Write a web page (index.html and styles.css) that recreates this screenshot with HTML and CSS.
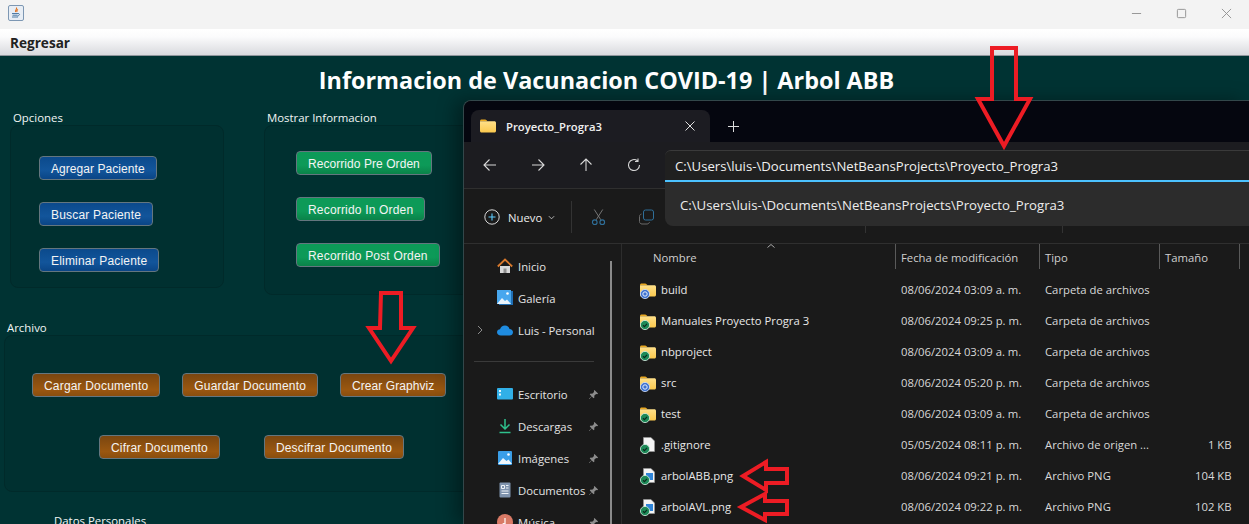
FILE: index.html
```html
<!DOCTYPE html>
<html>

<head>
    <meta charset="utf-8">
    <title>Arbol ABB</title>
    <link rel="stylesheet" href="styles.css">
</head>

<body>
    <svg class="defs" width="0" height="0">
        <defs>
            <linearGradient id="folderFill" x1="0" y1="0" x2="0" y2="1">
                <stop offset="0" stop-color="#ffe089" />
                <stop offset="1" stop-color="#fbc94e" />
            </linearGradient>
            <symbol id="folder" viewBox="0 0 16 14">
                <path d="M0 2.2C0 1.2.7.5 1.6.5h3.6c.5 0 .8.2 1.1.5L7.6 2.2H0z" fill="#e9a820" />
                <path d="M0 2.2h14.4c.9 0 1.6.7 1.6 1.6v8.2c0 .9-.7 1.5-1.6 1.5H1.6C.7 13.5 0 12.9 0 12z" fill="url(#folderFill)" />
            </symbol>
            <symbol id="okBadge" viewBox="0 0 10 10">
                <circle cx="5" cy="5" r="4.6" fill="#1d8a58" stroke="#d8efe4" stroke-width=".8" />
                <path d="M3 5.2l1.5 1.4L7 3.8" fill="none" stroke="#0b2a1e" stroke-width="1.2" />
            </symbol>
            <symbol id="syncBadge" viewBox="0 0 10 10">
                <circle cx="5" cy="5" r="4.6" fill="#3f72cf" stroke="#d5e2fb" stroke-width=".8" />
                <circle cx="5" cy="5" r="2.2" fill="none" stroke="#e6eefc" stroke-width="1" />
            </symbol>
            <symbol id="page" viewBox="0 0 12 15">
                <path d="M.5.5h7.5l3.5 3.5v10.500H.5z" fill="#f4f4f4" stroke="#9a9a9a" stroke-width=".6" />
            </symbol>
            <symbol id="pin" viewBox="0 0 12 12">
                <path d="M7 1l4 4-1 .6-1.200-.2-2 2 .2 1.800-.9.900-2-2L1.500 11 1 10.500l2.900-2.600-2-2 .9-.9 1.800.2 2-2-.2-1.200z" fill="#8c8c8c" />
            </symbol>
        </defs>
    </svg>

    <header class="titlebar">
        <svg class="java-icon" viewBox="0 0 16 16">
            <rect x=".5" y=".5" width="15" height="15" rx="1.500" fill="#e8eef5" stroke="#7d97b3" />
            <path d="M8.500 2.500c1 1.500-2 2.500-.8 4.500M10 4.500c-1.500.7-1.500 1.500-.8 2.500" fill="none" stroke="#e2701c" stroke-width="1.100" />
            <path d="M4 8.500h6M4.500 10.200h5M4 12h6M10 8.500c2 0 2 2-.5 2.500" fill="none" stroke="#3d6d9c" stroke-width=".9" />
        </svg>
        <div class="window-btns">
            <svg viewBox="0 0 12 12"><path d="M1 6h10" /></svg>
            <svg viewBox="0 0 12 12"><rect x="1.500" y="1.500" width="9" height="9" rx="1" /></svg>
            <svg viewBox="0 0 12 12"><path d="M1 1l10 10M11 1L1 11" /></svg>
        </div>
    </header>

    <nav class="menubar">Regresar</nav>

    <main class="app">
        <h1 class="app-title">Informacion de Vacunacion COVID-19 | Arbol ABB</h1>

        <div class="top-row">
            <section class="group group-opciones">
                <h2 class="group-label">Opciones</h2>
                <div class="panel panel-opciones">
                    <button class="btn btn-blue btn-tight">Agregar Paciente</button>
                    <button class="btn btn-blue">Buscar Paciente</button>
                    <button class="btn btn-blue">Eliminar Paciente</button>
                </div>
            </section>
            <section class="group group-mostrar">
                <h2 class="group-label">Mostrar Informacion</h2>
                <div class="panel panel-mostrar">
                    <button class="btn btn-green btn-tight">Recorrido Pre Orden</button>
                    <button class="btn btn-green">Recorrido In Orden</button>
                    <button class="btn btn-green">Recorrido Post Orden</button>
                </div>
            </section>
        </div>

        <section class="group group-archivo">
            <h2 class="group-label">Archivo</h2>
            <div class="panel panel-archivo">
                <div class="btn-row">
                    <button class="btn btn-orange">Cargar Documento</button>
                    <button class="btn btn-orange">Guardar Documento</button>
                    <button class="btn btn-orange btn-tight">Crear Graphviz</button>
                </div>
                <div class="btn-row btn-row-second">
                    <button class="btn btn-orange">Cifrar Documento</button>
                    <button class="btn btn-orange">Descifrar Documento</button>
                </div>
            </div>
        </section>

        <h2 class="group-label group-datos">Datos Personales</h2>
    </main>

    <div class="explorer">
        <div class="tabstrip">
            <div class="tab">
                <svg class="tab-folder"><use href="#folder" /></svg>
                <span class="tab-name">Proyecto_Progra3</span>
                <svg class="tab-close" viewBox="0 0 10 10"><path d="M.5.5l9 9M9.500.5l-9 9" /></svg>
            </div>
            <svg class="tab-plus" viewBox="0 0 11 11"><path d="M5.500 0v11M0 5.500h11" /></svg>
        </div>

        <div class="toolbar">
            <div class="nav-btns">
                <svg viewBox="0 0 14 14"><path d="M13 7H1M6.500 1.500L1 7l5.500 5.500" /></svg>
                <svg viewBox="0 0 14 14"><path d="M1 7h12M7.500 1.500L13 7l-5.500 5.500" /></svg>
                <svg viewBox="0 0 14 14"><path d="M7 13V1M1.500 6.500L7 1l5.500 5.500" /></svg>
                <svg viewBox="0 0 14 14"><path d="M12.500 7A5.500 5.500 0 1 1 10.500 2.800M11 .5v3h-3" /></svg>
            </div>
            <div class="address">C:\Users\luis-\Documents\NetBeansProjects\Proyecto_Progra3</div>
            <div class="suggest">C:\Users\luis-\Documents\NetBeansProjects\Proyecto_Progra3</div>
        </div>

        <div class="cmdbar">
            <svg class="new-icon" viewBox="0 0 16 16">
                <circle cx="8" cy="8" r="7.200" fill="none" stroke="#d8d8d8" />
                <path d="M8 4.500v7M4.500 8h7" fill="none" stroke="#60cdff" stroke-width="1.100" />
            </svg>
            <span class="new-label">Nuevo</span>
            <svg class="new-chevron" viewBox="0 0 8 5"><path d="M1 1l3 3 3-3" /></svg>
            <span class="cmd-sep"></span>
            <svg class="cmd-icon" viewBox="0 0 16 18">
                <path d="M3.500 1l7 11M12.500 1l-7 11" stroke="#7a7a7a" fill="none" />
                <circle cx="4" cy="14.500" r="2.500" fill="none" stroke="#2f6f99" stroke-width="1.200" />
                <circle cx="12" cy="14.500" r="2.500" fill="none" stroke="#2f6f99" stroke-width="1.200" />
            </svg>
            <svg class="cmd-icon cmd-copy" viewBox="0 0 15 15">
                <rect x="4.500" y=".5" width="10" height="10" rx="2" fill="none" stroke="#2f6f99" />
                <path d="M2.500 4.500C1.300 4.800.5 5.600.5 7v5c0 1.500 1 2.500 2.500 2.500h5c1.300 0 2.200-.8 2.500-2" fill="none" stroke="#6b6b6b" />
            </svg>
            <span class="cmd-sep cmd-sep-a"></span>
            <span class="cmd-sep cmd-sep-b"></span>
        </div>

        <div class="browser">
            <aside class="sidebar">
                <div class="side-item">
                    <svg class="side-icon" viewBox="0 0 16 16">
                        <path d="M3 8h10v7H3z" fill="#d9d9d9" />
                        <path d="M6.500 10.500h3V15h-3z" fill="#8d8d8d" />
                        <path d="M.8 8.500L8 1.500l7.200 7" fill="none" stroke="#d9792c" stroke-width="1.800" />
                    </svg>
                    <span>Inicio</span>
                </div>
                <div class="side-item">
                    <svg class="side-icon" viewBox="0 0 16 16">
                        <rect x="2" y="1" width="14" height="14" fill="#1f6fb5" />
                        <rect y="0" width="14" height="14" fill="#48a7ee" />
                        <path d="M0 14l5-6 3 3 2-1.500L14 14z" fill="#eaf4fc" />
                        <circle cx="10.500" cy="3.500" r="1.300" fill="#fff" />
                    </svg>
                    <span>Galería</span>
                </div>
                <div class="side-item">
                    <svg class="side-chevron" viewBox="0 0 6 10"><path d="M1 1l4 4-4 4" /></svg>
                    <svg class="side-icon" viewBox="0 0 16 12">
                        <path d="M4 11.500C1.500 11.500 0 10 0 8.300 0 6.500 1.500 5.300 3 5.300 3.700 3 5.500 1.500 8 1.500c2.300 0 4 1.500 4.500 3.500 2 0 3.500 1.300 3.500 3.200 0 2-1.500 3.300-3.500 3.300z" fill="#1f8ce0" />
                    </svg>
                    <span>Luis - Personal</span>
                </div>
                <div class="side-sep"></div>
                <div class="side-item">
                    <svg class="side-icon" viewBox="0 0 16 12">
                        <rect width="16" height="11.500" rx="1" fill="#31b0e8" />
                        <rect x="2" y="2" width="2" height="2" fill="#e8f7fd" />
                        <rect x="2" y="5.500" width="2" height="2" fill="#e8f7fd" />
                    </svg>
                    <span>Escritorio</span>
                    <svg class="pin"><use href="#pin" /></svg>
                </div>
                <div class="side-item">
                    <svg class="side-icon" viewBox="0 0 16 16">
                        <path d="M8 1v9M3.500 6.500L8 11l4.500-4.500" fill="none" stroke="#2fc18d" stroke-width="1.500" />
                        <path d="M2.500 14.500h11" stroke="#2fc18d" stroke-width="1.500" />
                    </svg>
                    <span>Descargas</span>
                    <svg class="pin"><use href="#pin" /></svg>
                </div>
                <div class="side-item">
                    <svg class="side-icon" viewBox="0 0 16 16">
                        <rect x="1" y="1" width="14" height="14" rx="1" fill="#3a9ee8" />
                        <path d="M1 14l5-6 3.500 3 2-1.500L15 14z" fill="#eef6fc" />
                        <circle cx="11.500" cy="4.500" r="1.300" fill="#fff" />
                    </svg>
                    <span>Imágenes</span>
                    <svg class="pin"><use href="#pin" /></svg>
                </div>
                <div class="side-item">
                    <svg class="side-icon" viewBox="0 0 16 16">
                        <rect x="2.500" y=".5" width="11" height="15" rx="1" fill="#7f93ad" />
                        <path d="M4.500 3.500h3v3h-3zM9 3.500h2.500M9 6h2.500M4.500 9h7M4.500 11.500h7" fill="none" stroke="#eef2f7" />
                    </svg>
                    <span>Documentos</span>
                    <svg class="pin"><use href="#pin" /></svg>
                </div>
                <div class="side-item">
                    <svg class="side-icon" viewBox="0 0 16 16">
                        <circle cx="8" cy="8" r="8" fill="#d97a66" />
                        <path d="M8 4v6" stroke="#fff" stroke-width="1.200" />
                        <circle cx="6.800" cy="10.500" r="1.500" fill="#fff" />
                    </svg>
                    <span>Música</span>
                    <svg class="pin"><use href="#pin" /></svg>
                </div>
                <span class="side-scroll"></span>
            </aside>

            <div class="files">
                <div class="file-row file-head">
                    <span class="col-name">Nombre</span>
                    <span class="col-head">Fecha de modificación</span>
                    <span class="col-head">Tipo</span>
                    <span class="col-head">Tamaño</span>
                    <span class="col-head"></span>
                    <svg class="sort-mark" viewBox="0 0 8 4"><path d="M.5 3.500L4 .5l3.500 3" /></svg>
                </div>
                <div class="file-row">
                    <span class="col-name">
                        <span class="file-icon"><svg class="ic-folder"><use href="#folder" /></svg><svg class="ic-badge"><use href="#syncBadge" /></svg></span>
                        build
                    </span>
                    <span>08/06/2024 03:09 a. m.</span><span>Carpeta de archivos</span><span></span>
                </div>
                <div class="file-row">
                    <span class="col-name">
                        <span class="file-icon"><svg class="ic-folder"><use href="#folder" /></svg><svg class="ic-badge"><use href="#okBadge" /></svg></span>
                        Manuales Proyecto Progra 3
                    </span>
                    <span>08/06/2024 09:25 p. m.</span><span>Carpeta de archivos</span><span></span>
                </div>
                <div class="file-row">
                    <span class="col-name">
                        <span class="file-icon"><svg class="ic-folder"><use href="#folder" /></svg><svg class="ic-badge"><use href="#okBadge" /></svg></span>
                        nbproject
                    </span>
                    <span>08/06/2024 03:09 a. m.</span><span>Carpeta de archivos</span><span></span>
                </div>
                <div class="file-row">
                    <span class="col-name">
                        <span class="file-icon"><svg class="ic-folder"><use href="#folder" /></svg><svg class="ic-badge"><use href="#syncBadge" /></svg></span>
                        src
                    </span>
                    <span>08/06/2024 05:20 p. m.</span><span>Carpeta de archivos</span><span></span>
                </div>
                <div class="file-row">
                    <span class="col-name">
                        <span class="file-icon"><svg class="ic-folder"><use href="#folder" /></svg><svg class="ic-badge"><use href="#okBadge" /></svg></span>
                        test
                    </span>
                    <span>08/06/2024 03:09 a. m.</span><span>Carpeta de archivos</span><span></span>
                </div>
                <div class="file-row">
                    <span class="col-name">
                        <span class="file-icon"><svg class="ic-page"><use href="#page" /></svg><svg class="ic-badge"><use href="#okBadge" /></svg></span>
                        .gitignore
                    </span>
                    <span>05/05/2024 08:11 p. m.</span><span>Archivo de origen ...</span><span class="col-size">1 KB</span>
                </div>
                <div class="file-row">
                    <span class="col-name">
                        <span class="file-icon"><svg class="ic-page"><use href="#page" /></svg><span class="ic-picture"></span><svg class="ic-badge"><use href="#okBadge" /></svg></span>
                        arbolABB.png
                    </span>
                    <span>08/06/2024 09:21 p. m.</span><span>Archivo PNG</span><span class="col-size">104 KB</span>
                </div>
                <div class="file-row">
                    <span class="col-name">
                        <span class="file-icon"><svg class="ic-page"><use href="#page" /></svg><span class="ic-picture"></span><svg class="ic-badge"><use href="#okBadge" /></svg></span>
                        arbolAVL.png
                    </span>
                    <span>08/06/2024 09:22 p. m.</span><span>Archivo PNG</span><span class="col-size">102 KB</span>
                </div>
            </div>
        </div>
    </div>

    <!-- red arrows drawn on top of the screenshot -->
    <svg class="arrows" viewBox="0 0 1249 524">
        <path d="M992 48h24v51h14l-26 47-26-47h14z" />
        <path d="M381 293h20v35h12l-22 33-22-33h11z" />
        <path d="M787 469v14h-21v7l-23-14 23-14v7z" />
        <path d="M787 501v13h-22v6l-24-13 24-13v7z" />
    </svg>
</body>

</html>
```

FILE: styles.css
```css
* {
    box-sizing: border-box;
}

body {
    position: relative;
    width: 1249px;
    height: 524px;
    margin: 0;
    overflow: hidden;
    background: #003333;
    font-family: "Open Sans", sans-serif;
}

.defs {
    position: absolute;
}

/* window chrome */
.titlebar {
    display: flex;
    align-items: center;
    justify-content: space-between;
    height: 29px;
    padding: 0 17px 3px 8px;
    background: #f3f3f3;
}

.java-icon {
    width: 16px;
    height: 16px;
}

.window-btns {
    display: flex;
    gap: 34px;
}

.window-btns svg {
    width: 11px;
    height: 11px;
    fill: none;
    stroke: #8f8f8f;
    stroke-width: 1;
}

.menubar {
    height: 27px;
    padding: 6px 0 0 10px;
    border-bottom: 1px solid #8f959c;
    background: linear-gradient(#ffffff, #fbfbfc 30%, #d9dade);
    color: #222;
    font-size: 13.600px;
    font-weight: 700;
    line-height: 16px;
}

/* java app */
.app {
    height: 468px;
    padding-top: 55px;
}

.app-title {
    position: absolute;
    top: 63px;
    left: 0;
    width: 1213px;
    margin: 0;
    color: #fff;
    font-size: 23.400px;
    font-weight: 700;
    line-height: 34px;
    text-align: center;
}

.top-row {
    display: flex;
    gap: 40px;
    padding-left: 10px;
}

.group-label {
    margin: 0;
    padding-left: 3px;
    color: #f2f5f5;
    font-size: 11.400px;
    font-weight: 400;
    line-height: 14px;
}

.panel {
    border: 1px solid #002a2a;
    border-radius: 8px;
    background: #003030;
}

.panel-opciones,
.panel-mostrar {
    display: flex;
    flex-direction: column;
    align-items: flex-start;
    gap: 22px;
}

.group-opciones {
    width: 214px;
}

.panel-opciones {
    height: 163px;
    padding: 30px 0 0 28px;
}

.group-mostrar {
    width: 300px;
}

.panel-mostrar {
    height: 170px;
    padding: 25px 0 0 31px;
}

.group-archivo {
    width: 500px;
    margin: 26px 0 0 4px;
}

.panel-archivo {
    display: flex;
    flex-direction: column;
    gap: 38px;
    height: 157px;
    padding: 37px 0 0 27px;
}

.btn-row {
    display: flex;
    gap: 22px;
}

.btn-row-second {
    gap: 44px;
    padding-left: 67px;
}

.group-datos {
    margin: 22px 0 0 54px;
    padding: 0;
}

.btn {
    height: 24px;
    padding: 1px 11px 0;
    border: 1px solid #64767f;
    border-radius: 4px;
    color: #f4f4f4;
    font-family: "Liberation Sans", Arial, sans-serif;
    font-size: 12px;
    letter-spacing: .18px;
    line-height: 20px;
    white-space: nowrap;
}

.btn-tight {
    letter-spacing: .06px;
}

.btn-blue {
    background: linear-gradient(#0b4a8c, #12559b 60%, #0a4586);
}

.btn-green {
    background: linear-gradient(#0c9a58, #0d9a58 60%, #0a8249);
}

.btn-orange {
    background: linear-gradient(#7a4610, #9a5710 70%, #8a4e0e);
}

/* file explorer on top */
.explorer {
    position: absolute;
    top: 100px;
    left: 463px;
    display: flex;
    flex-direction: column;
    width: 786px;
    height: 424px;
    overflow: hidden;
    border-top: 1px solid #33474a;
    border-left: 1px solid #33474a;
    border-radius: 8px 0 0 0;
    background: #1a1a1a;
    box-shadow: -8px 0 18px rgba(0, 0, 0, .35);
    color: #e6e6e6;
    font-size: 11.300px;
}

.tabstrip {
    display: flex;
    align-items: flex-end;
    height: 41px;
    padding-left: 7px;
    background: #05060f;
}

.tab {
    display: flex;
    align-items: center;
    width: 239px;
    height: 32px;
    padding: 0 15px 0 9px;
    border-radius: 8px 8px 0 0;
    background: #1c1c22;
}

.tab-folder {
    width: 16px;
    height: 14px;
}

.tab-name {
    flex: 1;
    margin-left: 10px;
    color: #f0f0f0;
    font-weight: 600;
}

.tab-close {
    width: 10px;
    height: 10px;
    fill: none;
    stroke: #e0e0e0;
    stroke-width: 1;
}

.tab-plus {
    width: 11px;
    height: 11px;
    margin: 0 0 10px 18px;
    fill: none;
    stroke: #dcdcdc;
    stroke-width: 1;
}

.toolbar {
    position: relative;
    display: flex;
    align-items: center;
    height: 47px;
    border-bottom: 1px solid #2f2f2f;
    background: #1c1c20;
}

.nav-btns {
    display: flex;
    gap: 34px;
    padding-left: 19px;
}

.nav-btns svg {
    width: 14px;
    height: 14px;
    fill: none;
    stroke: #d6d6d6;
    stroke-width: 1.100;
}

.address {
    position: absolute;
    top: 8px;
    left: 201px;
    width: 590px;
    height: 32px;
    padding-left: 10px;
    border-top: 1px solid #3a3a3a;
    border-bottom: 2px solid #4cc2ff;
    border-radius: 6px 0 0 0;
    background: #202020;
    color: #f0f0f0;
    font-size: 13.150px;
    line-height: 31px;
}

.suggest {
    position: absolute;
    top: 40px;
    left: 201px;
    z-index: 2;
    width: 590px;
    height: 44px;
    padding-left: 15px;
    border-radius: 0 0 0 8px;
    background: #2c2c2c;
    color: #ececec;
    font-size: 13.200px;
    line-height: 47px;
}

.cmdbar {
    position: relative;
    display: flex;
    align-items: center;
    flex: none;
    height: 55px;
    padding: 2px 0 0 20px;
    border-bottom: 1px solid #2f2f2f;
    background: #1a1a1a;
}

.new-icon {
    width: 16px;
    height: 16px;
}

.new-label {
    margin-left: 8px;
    color: #ececec;
}

.new-chevron {
    width: 7px;
    height: 5px;
    margin-left: 6px;
    fill: none;
    stroke: #c8c8c8;
}

.cmd-sep {
    width: 1px;
    height: 32px;
    margin: 0 0 0 16px;
    background: #333;
}

.cmd-icon {
    width: 15px;
    height: 18px;
    margin-left: 19px;
}

.cmd-copy {
    margin-left: 33px;
}

.cmd-sep-a {
    position: absolute;
    left: 401px;
    margin: 0;
}

.cmd-sep-b {
    position: absolute;
    left: 598px;
    margin: 0;
}

.browser {
    display: flex;
    flex: 1;
    min-height: 0;
}

.sidebar {
    position: relative;
    flex: none;
    width: 158px;
    padding-top: 6px;
    border-right: 1px solid #2d2d2d;
}

.side-item {
    position: relative;
    display: flex;
    align-items: center;
    height: 32px;
    padding-left: 33px;
    color: #e4e4e4;
}

.side-item span {
    margin-left: 5px;
}

.side-icon {
    width: 16px;
    height: 16px;
}

.side-chevron {
    position: absolute;
    left: 13px;
    width: 6px;
    height: 10px;
    fill: none;
    stroke: #8a8a8a;
}

.pin {
    position: absolute;
    left: 124px;
    width: 11px;
    height: 11px;
}

.side-sep {
    height: 1px;
    margin: 15px 27px 16px 10px;
    background: #3a3a3a;
}

.side-scroll {
    position: absolute;
    top: 17px;
    right: 9px;
    width: 2px;
    height: 270px;
    background: #8a8a8a;
}

.files {
    position: relative;
    flex: 1;
}

.file-row {
    display: grid;
    grid-template-columns: 272.500px 144px 120px 80px 10px;
    align-items: center;
    height: 31px;
    color: #d8d8d8;
}

.file-row > span {
    padding-left: 6.500px;
}

.file-row > .col-name {
    display: flex;
    align-items: center;
    padding-left: 18px;
    color: #e8e8e8;
}

.file-row > .col-size {
    padding: 0 7px 0 0;
    text-align: right;
}

.file-head {
    align-items: start;
    height: 26px;
    margin-bottom: 4px;
}

.file-row > .col-head {
    height: 25px;
    padding-left: 5.500px;
    border-left: 1px solid #5a5a5a;
    color: #d0d0d0;
    line-height: 27px;
}

.file-head > .col-name {
    height: 27px;
    padding-left: 31px;
    color: #d0d0d0;
}

.sort-mark {
    position: absolute;
    top: 0;
    left: 145px;
    width: 8px;
    height: 4px;
    fill: none;
    stroke: #a8a8a8;
}

.file-icon {
    position: relative;
    flex: none;
    width: 16px;
    height: 16px;
    margin-right: 5px;
}

.ic-folder {
    position: absolute;
    top: 1px;
    left: 0;
    width: 16px;
    height: 14px;
}

.ic-page {
    position: absolute;
    top: 0;
    left: 3px;
    width: 12px;
    height: 15px;
}

.ic-picture {
    position: absolute;
    top: 5px;
    left: 6px;
    width: 7px;
    height: 7px;
    background: #2f84d8;
}

.ic-badge {
    position: absolute;
    right: 6px;
    bottom: -1px;
    width: 10px;
    height: 10px;
}

.arrows {
    position: absolute;
    top: 0;
    left: 0;
    width: 1249px;
    height: 524px;
    fill: none;
    stroke: #ed1c24;
    stroke-width: 4;
    pointer-events: none;
}
```
